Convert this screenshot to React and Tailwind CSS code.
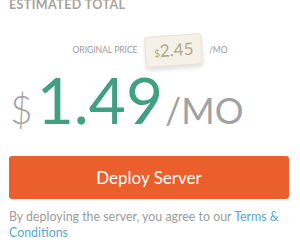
const App = () => {
  return (
    <div className="w-[300px] h-[247px] overflow-hidden bg-white font-['Lato','Open_Sans',sans-serif]">
      <div className="px-[9px]">
        <h2 className="-mt-[2px] text-[12.5px] leading-[14px] font-bold uppercase tracking-[0.4px] text-[#a7a39b]">
          Estimated Total
        </h2>

        {/* original price */}
        <div className="mt-[23px] flex items-center justify-center gap-[7px] text-[8.5px] text-[#9b9b9b] uppercase">
          <span>Original Price</span>
          <div className="-rotate-[4deg] rounded-[3px] border border-[#ebe3d3] bg-[#f6f1e6] px-[8px] py-[5px] shadow-[0_3px_4px_rgba(0,0,0,0.12)]">
            <span className="text-[10px] text-[#b0a690]">$</span>
            <span className="text-[17px] leading-[17px] text-[#b0a690]">2.45</span>
          </div>
          <span>/mo</span>
        </div>

        {/* big price */}
        <div className="mt-[2px] flex items-baseline leading-none">
          <span className="ml-[1px] text-[39px] text-[#a2a2a2] font-light">$</span>
          <span className="ml-[4px] text-[64px] text-[#40a07f]">1.49</span>
          <span className="ml-[2px] text-[36px] text-[#a2a2a2] uppercase">/mo</span>
        </div>

        <button className="mt-[24px] w-[280px] h-[43px] rounded-[3px] bg-[#ea5f2b] text-white text-[17px]">
          Deploy Server
        </button>

        <p className="mt-[10px] text-[12.4px] leading-[16px] text-[#9b9b9b]">
          By deploying the server, you agree to our{" "}
          <a className="text-[#55a9cc]">Terms &amp; Conditions</a>
        </p>
      </div>
    </div>
  );
};

export default App;
